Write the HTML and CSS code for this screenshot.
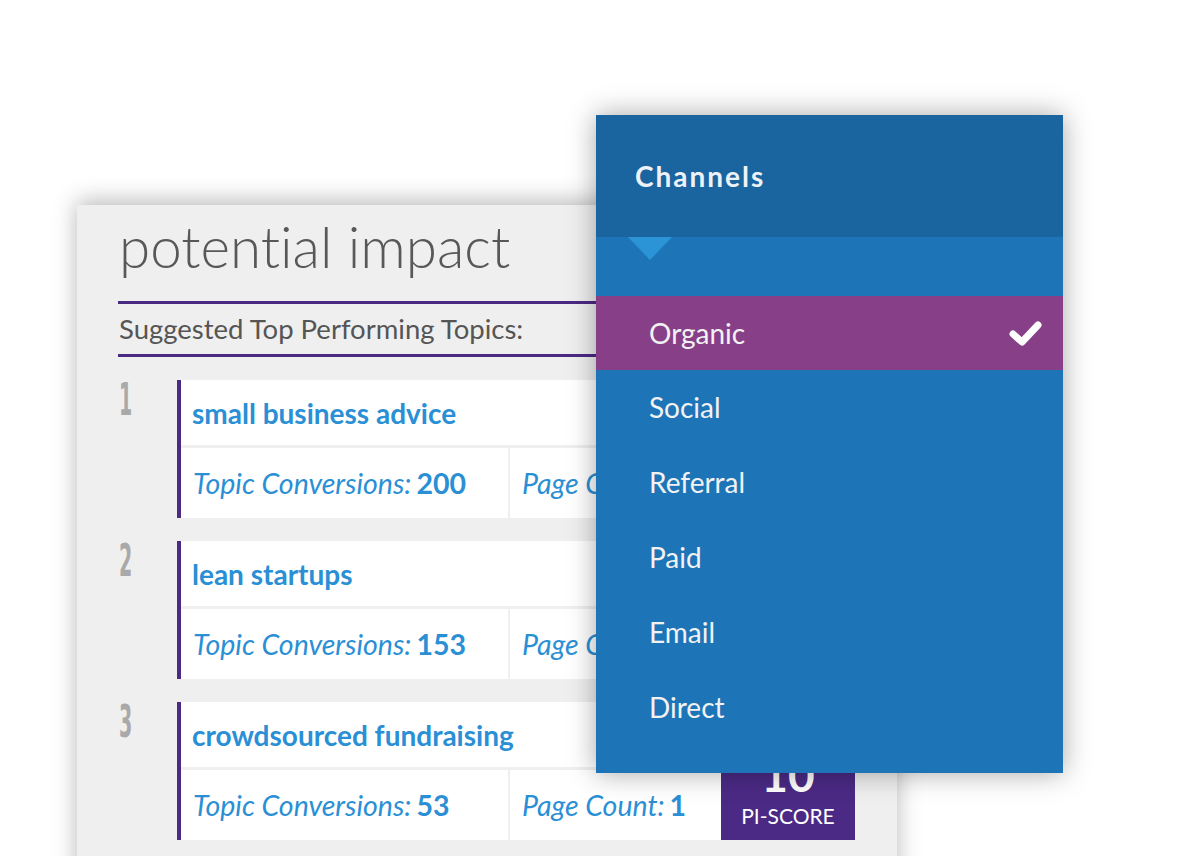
FILE: index.html
```html
<!DOCTYPE html>
<html lang="en">
<head>
<meta charset="utf-8">
<title>potential impact</title>
<link rel="stylesheet" href="styles.css">
</head>
<body>
<div class="stage">
  <section class="panel">
    <h1 class="title">potential impact</h1>
    <div class="subhead">Suggested Top Performing Topics:</div>
    <ol class="topics">
      <li class="topic">
        <span class="rank">1</span>
        <div class="card">
          <div class="card-main">
            <div class="card-title">small business advice</div>
            <div class="card-stats">
              <div class="stat stat-conv">Topic Conversions: <b>200</b></div>
              <div class="stat">Page Count: <b>4</b></div>
            </div>
          </div>
          <div class="score"><b>34</b><span>PI-SCORE</span></div>
        </div>
      </li>
      <li class="topic">
        <span class="rank">2</span>
        <div class="card">
          <div class="card-main">
            <div class="card-title">lean startups</div>
            <div class="card-stats">
              <div class="stat stat-conv">Topic Conversions: <b>153</b></div>
              <div class="stat">Page Count: <b>3</b></div>
            </div>
          </div>
          <div class="score"><b>22</b><span>PI-SCORE</span></div>
        </div>
      </li>
      <li class="topic">
        <span class="rank">3</span>
        <div class="card">
          <div class="card-main">
            <div class="card-title">crowdsourced fundraising</div>
            <div class="card-stats">
              <div class="stat stat-conv">Topic Conversions: <b>53</b></div>
              <div class="stat">Page Count: <b>1</b></div>
            </div>
          </div>
          <div class="score"><b>10</b><span>PI-SCORE</span></div>
        </div>
      </li>
    </ol>
  </section>

  <div class="dropdown">
    <div class="dd-header">Channels</div>
    <div class="dd-band"><span class="dd-caret"></span></div>
    <ul class="dd-list">
      <li class="dd-item dd-selected">Organic
        <svg class="dd-check" width="34" height="28" viewBox="0 0 34 28"><polyline points="4,15 13,23 29,6" fill="none" stroke="#fff" stroke-width="7" stroke-linecap="round" stroke-linejoin="round"/></svg>
      </li>
      <li class="dd-item">Social</li>
      <li class="dd-item">Referral</li>
      <li class="dd-item">Paid</li>
      <li class="dd-item">Email</li>
      <li class="dd-item">Direct</li>
    </ul>
  </div>
</div>
</body>
</html>
```

FILE: styles.css
```css
html, body {
  margin: 0;
  padding: 0;
  background: #ffffff;
  overflow: hidden;
}
body {
  width: 1200px;
  height: 856px;
  font-family: Lato, "Open Sans", sans-serif;
  font-variant-ligatures: none;
}
.stage {
  position: relative;
  width: 1200px;
  height: 856px;
  overflow: hidden;
}

/* left panel */
.panel {
  margin: 205px 0 0 77px;
  width: 820px;
  height: 700px;
  box-sizing: border-box;
  padding: 10px 42px 0 41px;
  background: #efefef;
  box-shadow: 0 -4px 22px rgba(0,0,0,0.28);
}
.title {
  margin: 0 0 0 1px;
  font-weight: 300;
  font-size: 56.5px;
  line-height: 62px;
  color: #585858;
}
.subhead {
  margin-top: 24px;
  border-top: 3px solid #4b2a84;
  border-bottom: 3px solid #4b2a84;
  padding: 0 0 0 1px;
  height: 50px;
  line-height: 50px;
  font-size: 27.5px;
  color: #555;
  font-weight: 400;
}
.topics {
  list-style: none;
  margin: 23px 0 0 0;
  padding: 0;
  display: flex;
  flex-direction: column;
  gap: 23px;
}
.topic {
  display: flex;
  align-items: flex-start;
}
.rank {
  width: 58px;
  flex: none;
  font-family: "DejaVu Sans Condensed", "DejaVu Sans", sans-serif;
  font-weight: bold;
  font-size: 44px;
  line-height: 40px;
  color: #a9a9a9;
  display: inline-block;
  transform: scaleX(0.48);
  transform-origin: left top;
  margin-left: 1px;
}
.card {
  flex: 1;
  display: flex;
  height: 138px;
  border-left: 4px solid #4b2a84;
}
.card-main {
  flex: 1;
  display: flex;
  flex-direction: column;
  background: #fff;
}
.card-title {
  height: 65px;
  line-height: 66px;
  padding-left: 11px;
  font-weight: 700;
  font-size: 28px;
  color: #2a8fd5;
  border-bottom: 3px solid #efefef;
}
.card-stats {
  flex: 1;
  display: flex;
}
.stat {
  display: flex;
  align-items: center;
  padding-left: 12px;
  font-style: italic;
  font-size: 28.5px;
  color: #2a8fd5;
  white-space: nowrap;
  overflow: hidden;
}
.stat b {
  font-style: normal;
  font-weight: 700;
  margin-left: 5px;
}
.stat-conv {
  width: 315px;
  flex: none;
  border-right: 2px solid #efefef;
}
.score {
  width: 134px;
  flex: none;
  background: #4b2a85;
  color: #fff;
  display: flex;
  flex-direction: column;
  align-items: center;
  justify-content: flex-end;
  padding-bottom: 10px;
  box-sizing: border-box;
}
.score b {
  font-size: 46px;
  line-height: 46px;
  font-weight: 700;
}
.score span {
  font-size: 21px;
  line-height: 28px;
  margin-top: 4px;
}

/* dropdown overlay */
.dropdown {
  position: absolute;
  left: 596px;
  top: 115px;
  width: 467px;
  height: 658px;
  background: #1d75b8;
  box-shadow: 0 0 26px rgba(0,0,0,0.35);
  color: #f2f2f2;
}
.dd-header {
  height: 122px;
  box-sizing: border-box;
  padding-left: 39px;
  line-height: 122px;
  background: #1a64a0;
  font-weight: 700;
  font-size: 28px;
  letter-spacing: 2px;
  color: #eef2f6;
}
.dd-band {
  height: 59px;
  position: relative;
}
.dd-caret {
  position: absolute;
  left: 32px;
  top: 0;
  width: 0;
  height: 0;
  border-left: 22px solid transparent;
  border-right: 22px solid transparent;
  border-top: 23px solid #2a94d6;
}
.dd-list {
  list-style: none;
  margin: 0;
  padding: 0;
}
.dd-item {
  height: 75px;
  line-height: 75px;
  padding-left: 53px;
  font-size: 28px;
  position: relative;
}
.dd-selected {
  height: 74px;
  line-height: 74px;
  background: #873f88;
}
.dd-check {
  position: absolute;
  right: 20px;
  top: 23px;
}
```
